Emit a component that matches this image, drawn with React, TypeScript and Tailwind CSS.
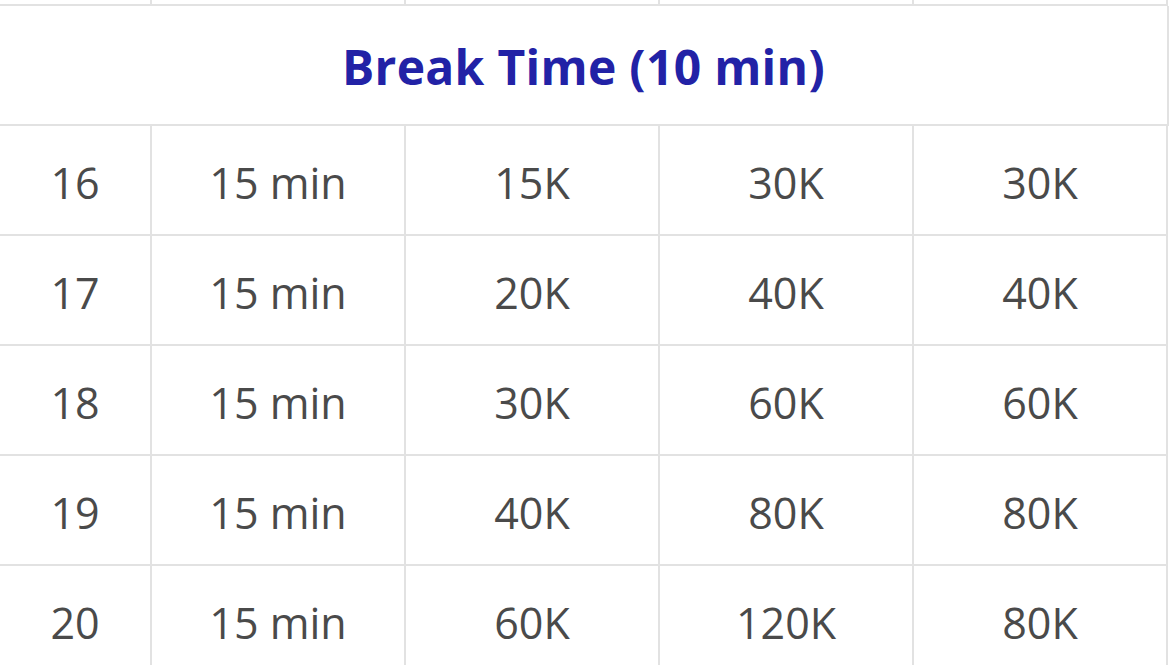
const rows = [
  ["16", "15 min", "15K", "30K", "30K"],
  ["17", "15 min", "20K", "40K", "40K"],
  ["18", "15 min", "30K", "60K", "60K"],
  ["19", "15 min", "40K", "80K", "80K"],
  ["20", "15 min", "60K", "120K", "80K"],
];

const cols = "grid grid-cols-[152px_254px_254px_254px_254px]";
const cell = "flex items-center justify-center border-r-2 border-b-2 border-[#e2e2e2]";

export default function App() {
  return (
    <div className="w-[1170px] h-[665px] overflow-hidden bg-white font-['Open_Sans',sans-serif] text-[#4a4a4a]">
      <div className="w-[1169px]">
        {/* tail of the row above */}
        <div className={`${cols} h-[6px]`}>
          {[0, 1, 2, 3, 4].map((i) => (
            <div key={i} className={cell} />
          ))}
        </div>

        <div className="h-[120px] flex items-center justify-center border-r-2 border-b-2 border-[#e2e2e2]">
          <h2 className="text-[48px] font-bold text-[#2222a6] tracking-[0.3px] pt-[4px]">
            Break Time (10 min)
          </h2>
        </div>

        {rows.map((r) => (
          <div key={r[0]} className={`${cols} h-[110px]`}>
            {r.map((v, i) => (
              <div key={i} className={`${cell} text-[43px] pt-[6px]`}>
                {v}
              </div>
            ))}
          </div>
        ))}
      </div>
    </div>
  );
}
